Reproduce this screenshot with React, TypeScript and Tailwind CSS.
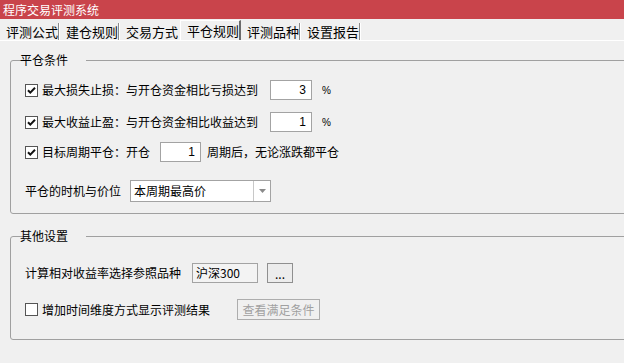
import React from "react";

const CJK = { fontFamily: '"Noto Sans CJK SC", "Noto Sans", sans-serif' };

function Check({ checked }: { checked: boolean }) {
  return (
    <div className="w-[13px] h-[13px] bg-white border border-[#555] shrink-0 flex items-center justify-center">
      {checked && (
        <svg width="11" height="11" viewBox="0 0 11 11">
          <path d="M2 5.2 L4.3 7.6 L9 2.8" fill="none" stroke="#111" strokeWidth="2" />
        </svg>
      )}
    </div>
  );
}

function NumBox({ value, w }: { value: string; w: string }) {
  return (
    <div
      className={`${w} h-[20px] bg-white border border-[#a3a3a3] flex items-center justify-end pr-[5px] text-[12px] leading-none`}
      style={{ fontFamily: '"Liberation Sans", sans-serif' }}
    >
      {value}
    </div>
  );
}

const tabs = ["评测公式", "建仓规则", "交易方式", "平仓规则", "评测品种", "设置报告"];

export default function App() {
  return (
    <div className="w-[624px] h-[363px] bg-[#f0f0f0] overflow-hidden text-black" style={CJK}>
      {/* title */}
      <div className="h-[19px] bg-[#c9444b] text-white text-[12px] leading-[19px] pl-[3px]">
        程序交易评测系统
      </div>
      {/* tabs */}
      <div className="h-[21px] flex items-end">
        {tabs.map((t, i) =>
          i === 3 ? (
            <div
              key={t}
              className="w-[61px] h-[20px] border-l border-t border-white border-r-2 border-r-[#6b6b6b] flex items-center pl-[6px] text-[13px] leading-none"
            >
              {t}
            </div>
          ) : (
            <div key={t} className="w-[60px] h-[17px] flex items-center relative">
              <span className="pl-[6px] text-[13px] leading-none">{t}</span>
              {i !== 2 && (
                <div className="absolute right-0 top-0 h-[17px] w-[2px] border-l border-[#8a8a8a] bg-white" />
              )}
            </div>
          )
        )}
      </div>
      <div className="h-px bg-white" />

      {/* group 1 */}
      <fieldset className="ml-[10px] mt-[11px] w-[640px] border border-[#a0a0a0] rounded-[3px] p-0 pl-[14px] pb-[11px] text-[12px]">
        <legend className="ml-[5px] px-[4px] leading-[16px] -translate-x-[14px]">平仓条件</legend>
        <div className="flex flex-col">
          <div className="mt-[12px] h-[20px] flex items-center">
            <Check checked />
            <span className="ml-[4px] leading-none">最大损失止损：与开仓资金相比亏损达到</span>
            <div className="ml-[12px]">
              <NumBox value="3" w="w-[42px]" />
            </div>
            <span className="ml-[10px] text-[10px]" style={{ fontFamily: '"Liberation Sans", sans-serif' }}>%</span>
          </div>
          <div className="mt-[12px] h-[20px] flex items-center">
            <Check checked />
            <span className="ml-[4px] leading-none">最大收益止盈：与开仓资金相比收益达到</span>
            <div className="ml-[12px]">
              <NumBox value="1" w="w-[42px]" />
            </div>
            <span className="ml-[10px] text-[10px]" style={{ fontFamily: '"Liberation Sans", sans-serif' }}>%</span>
          </div>
          <div className="mt-[10px] h-[20px] flex items-center">
            <Check checked />
            <span className="ml-[4px] leading-none">目标周期平仓：开仓</span>
            <div className="ml-[10px]">
              <NumBox value="1" w="w-[41px]" />
            </div>
            <span className="ml-[6px] leading-none">周期后，无论涨跌都平仓</span>
          </div>
          <div className="mt-[18px] h-[22px] flex items-center">
            <span className="leading-none">平仓的时机与价位</span>
            <div className="ml-[9px] w-[141px] h-[22px] bg-white border border-[#a3a3a3] flex items-stretch">
              <div className="flex-1 flex items-center pl-[3px] leading-none">本周期最高价</div>
              <div className="w-[17px] border-l border-[#c8c8c8] flex items-center justify-center">
                <svg width="7" height="4" viewBox="0 0 7 4">
                  <path d="M0 0 L7 0 L3.5 4 Z" fill="#8a8a8a" />
                </svg>
              </div>
            </div>
          </div>
        </div>
      </fieldset>

      {/* group 2 */}
      <fieldset className="ml-[10px] mt-[14px] w-[640px] border border-[#a0a0a0] rounded-[3px] p-0 pl-[14px] pb-[19px] text-[12px]">
        <legend className="ml-[5px] px-[4px] leading-[16px] -translate-x-[14px]">其他设置</legend>
        <div className="flex flex-col">
          <div className="mt-[19px] h-[20px] flex items-center">
            <span className="leading-none">计算相对收益率选择参照品种</span>
            <div className="ml-[11px] w-[66px] h-[20px] border border-[#a3a3a3] bg-[#f3f3f3] flex items-center pl-[3px] leading-none">
              沪深300
            </div>
            <div className="ml-[9px] w-[26px] h-[20px] border border-[#8f8f8f] bg-[#ececec] flex items-end justify-center pb-[2px] leading-none text-[12px]">
              ...
            </div>
          </div>
          <div className="mt-[16px] h-[21px] flex items-center">
            <Check checked={false} />
            <span className="ml-[4px] leading-none">增加时间维度方式显示评测结果</span>
            <div className="ml-[27px] w-[83px] h-[21px] border border-[#adadad] bg-[#f0f0f0] flex items-center justify-center leading-none text-[#a0a0a0]">
              查看满足条件
            </div>
          </div>
        </div>
      </fieldset>
    </div>
  );
}
